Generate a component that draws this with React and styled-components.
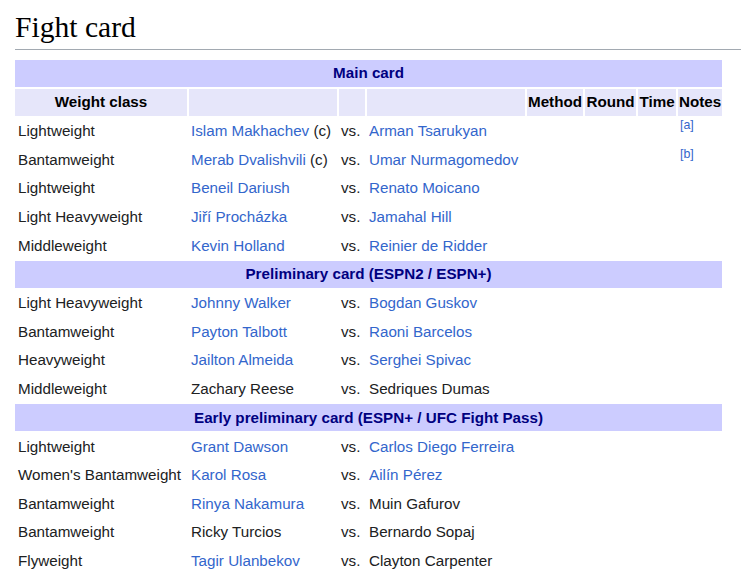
import React from "react";
import styled, { createGlobalStyle } from "styled-components";

const GlobalStyle = createGlobalStyle`
	html, body {
		margin: 0;
		padding: 0;
		background: #ffffff;
	}
`;

const SECTIONS = [
	{
		title: "Main card",
		header: true,
		fights: [
			{ weight: "Lightweight", a: "Islam Makhachev", aLink: true, aNote: "(c)", b: "Arman Tsarukyan", bLink: true, note: "[a]" },
			{ weight: "Bantamweight", a: "Merab Dvalishvili", aLink: true, aNote: "(c)", b: "Umar Nurmagomedov", bLink: true, note: "[b]" },
			{ weight: "Lightweight", a: "Beneil Dariush", aLink: true, b: "Renato Moicano", bLink: true },
			{ weight: "Light Heavyweight", a: "Jiří Procházka", aLink: true, b: "Jamahal Hill", bLink: true },
			{ weight: "Middleweight", a: "Kevin Holland", aLink: true, b: "Reinier de Ridder", bLink: true },
		],
	},
	{
		title: "Preliminary card (ESPN2 / ESPN+)",
		fights: [
			{ weight: "Light Heavyweight", a: "Johnny Walker", aLink: true, b: "Bogdan Guskov", bLink: true },
			{ weight: "Bantamweight", a: "Payton Talbott", aLink: true, b: "Raoni Barcelos", bLink: true },
			{ weight: "Heavyweight", a: "Jailton Almeida", aLink: true, b: "Serghei Spivac", bLink: true },
			{ weight: "Middleweight", a: "Zachary Reese", b: "Sedriques Dumas" },
		],
	},
	{
		title: "Early preliminary card (ESPN+ / UFC Fight Pass)",
		fights: [
			{ weight: "Lightweight", a: "Grant Dawson", aLink: true, b: "Carlos Diego Ferreira", bLink: true },
			{ weight: "Women's Bantamweight", a: "Karol Rosa", aLink: true, b: "Ailín Pérez", bLink: true },
			{ weight: "Bantamweight", a: "Rinya Nakamura", aLink: true, b: "Muin Gafurov" },
			{ weight: "Bantamweight", a: "Ricky Turcios", b: "Bernardo Sopaj" },
			{ weight: "Flyweight", a: "Tagir Ulanbekov", aLink: true, b: "Clayton Carpenter" },
		],
	},
];

const COLUMNS = ["Weight class", "", "", "", "Method", "Round", "Time", "Notes"];
const WIDTHS = [172, 148, 26, 158, 56, 51, 38, 44];

const Fighter = ({ name, link }) =>
	link ? <Link href="#">{name}</Link> : <span>{name}</span>;

const App = () => {
	return (
		<Page>
			<GlobalStyle />
			<Heading>Fight card</Heading>
			<CardTable>
				<colgroup>
					{WIDTHS.map((w, i) => (
						<col key={i} style={{ width: w }} />
					))}
				</colgroup>
				{SECTIONS.map((section) => (
					<tbody key={section.title}>
						<tr>
							<BandCell colSpan={8}>{section.title}</BandCell>
						</tr>
						{section.header && (
							<tr>
								{COLUMNS.map((label, i) => (
									<HeadCell key={i}>{label}</HeadCell>
								))}
							</tr>
						)}
						{section.fights.map((fight, i) => (
							<tr key={i}>
								<Cell $first>{fight.weight}</Cell>
								<Cell>
									<Fighter name={fight.a} link={fight.aLink} />
									{fight.aNote && <> {fight.aNote}</>}
								</Cell>
								<Cell>vs.</Cell>
								<Cell>
									<Fighter name={fight.b} link={fight.bLink} />
								</Cell>
								<Cell />
								<Cell />
								<Cell />
								<Cell>
									{fight.note && <NoteRef href="#">{fight.note}</NoteRef>}
								</Cell>
							</tr>
						))}
					</tbody>
				))}
			</CardTable>
		</Page>
	);
};

const Page = styled.div`
	padding: 9px 0 0 15px;
	color: #202122;
	font-family: "Liberation Sans", Arial, sans-serif;
`;

const Heading = styled.h2`
	margin: 0 0 8px;
	padding-bottom: 3px;
	border-bottom: 1px solid #a2a9b1;
	font-family: "Liberation Serif", "Times New Roman", serif;
	font-size: 29.6px;
	font-weight: normal;
	line-height: 1.25;
	color: #000000;
`;

const CardTable = styled.table`
	table-layout: fixed;
	width: 711px;
	margin-left: -2px;
	border-spacing: 2px;
	font-size: 15.2px;
	line-height: 1.2;
`;

const BandCell = styled.th`
	height: 27px;
	padding: 0;
	background: #ccccff;
	color: #000080;
	font-weight: bold;
	text-align: center;
	vertical-align: middle;
`;

const HeadCell = styled.th`
	height: 27px;
	padding: 0 1px;
	background: #e6e6fa;
	color: #000000;
	font-weight: bold;
	text-align: center;
	vertical-align: middle;
	white-space: nowrap;
	overflow: hidden;
`;

const Cell = styled.td`
	height: 26.6px;
	padding: 0 ${(p) => (p.$first ? "3px" : "2px")};
	vertical-align: middle;
	white-space: nowrap;
	color: #202122;
`;

const Link = styled.a`
	color: #3366cc;
	text-decoration: none;
`;

const NoteRef = styled.a`
	position: relative;
	top: -7px;
	font-size: 12.4px;
	color: #3366cc;
	text-decoration: none;
`;

export default App;
